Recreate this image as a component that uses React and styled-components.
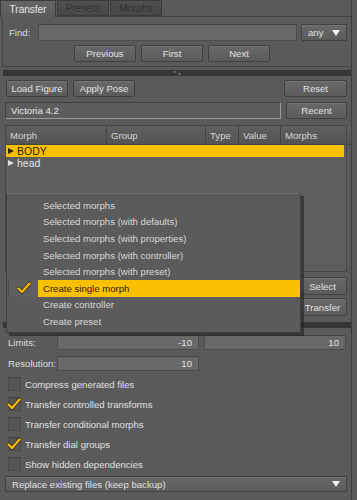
import React from 'react'
import styled, { createGlobalStyle } from 'styled-components'

const Global = createGlobalStyle`
  html, body { margin: 0; padding: 0; background: #5a5a5a; }
  body { font-family: "Liberation Sans", Arial, sans-serif; font-size: 9.6px; color: #e2e2e2; }
`

const Screen = styled.div`
  position: relative;
  width: 357px;
  height: 500px;
  overflow: hidden;
  background: #5a5a5a;
`

const Main = styled.div`
  width: 352px;
  height: 500px;
  border-right: 1px solid #3d3d3d;
  box-sizing: border-box;
`

const TabBar = styled.div`
  display: flex;
  height: 17px;
  border-bottom: 1px solid #454545;
  box-sizing: border-box;
`

const Tab = styled.div`
  width: ${p => p.w}px;
  height: ${p => (p.active ? 17 : 16)}px;
  box-sizing: border-box;
  display: flex;
  align-items: center;
  justify-content: center;
  border: 1px solid #3b3b3b;
  border-bottom: ${p => (p.active ? 'none' : '1px solid #3b3b3b')};
  margin-right: 1px;
  background: ${p => (p.active ? 'linear-gradient(#646464, #5c5c5c)' : 'linear-gradient(#4f4f4f, #474747)')};
  color: ${p => (p.active ? '#e6e6e6' : '#2e2e2e')};
  text-shadow: ${p => (p.active ? 'none' : '0 1px 0 #575757')};
  font-size: 10px;
  position: relative;
  z-index: 1;
`

const FindPanel = styled.div`
  margin: 0 0 0 2px;
  padding: 7px 4px 4px 6px;
  border-left: 1px solid #454545;
  border-bottom: 1px solid #454545;
  height: 50px;
  box-sizing: border-box;
`

const Row = styled.div`
  display: flex;
  align-items: center;
  gap: ${p => p.gap ?? 5}px;
  height: ${p => p.h || 17}px;
  margin-top: ${p => p.mt || 0}px;
  justify-content: ${p => p.justify || 'flex-start'};
`

const Label = styled.span`
  width: ${p => p.w}px;
  flex: none;
  color: #dedede;
  white-space: nowrap;
`

const Input = styled.div`
  flex: ${p => (p.w ? 'none' : '1')};
  width: ${p => p.w}px;
  height: ${p => p.h || 17}px;
  box-sizing: border-box;
  background: #686868;
  border: 1px solid #4c4c4c;
  border-top-color: #444;
  display: flex;
  align-items: center;
  justify-content: ${p => (p.right ? 'flex-end' : 'flex-start')};
  padding: 0 6px;
  color: #e4e4e4;
`

const Button = styled.div`
  width: ${p => p.w}px;
  height: ${p => p.h || 17}px;
  flex: none;
  box-sizing: border-box;
  background: linear-gradient(#696969, #5b5b5b);
  border: 1px solid #404040;
  border-radius: 2px;
  box-shadow: inset 0 1px 0 #747474;
  display: flex;
  align-items: center;
  justify-content: center;
  color: #e2e2e2;
  white-space: nowrap;
`

const Select = styled(Button)`
  width: ${p => (p.w ? p.w + 'px' : 'auto')};
  flex: ${p => (p.w ? 'none' : '1')};
  justify-content: space-between;
  padding: 0 6px 0 6px;
  border-radius: 1px;
`

const Arrow = styled.span`
  width: 0;
  height: 0;
  border-left: 4px solid transparent;
  border-right: 4px solid transparent;
  border-top: 6px solid #f2f2f2;
`

const Splitter = styled.div`
  height: 6px;
  margin: ${p => p.m};
  background: #363636;
  display: flex;
  justify-content: center;
  align-items: center;
`

const Section = styled.div`
  padding: 0 4px 0 5px;
`

const NameField = styled.div`
  width: 277px;
  height: 17px;
  box-sizing: border-box;
  background: #5d5d5d;
  border: 1px solid #3e3e3e;
  border-right-color: #9a9a9a;
  border-bottom-color: #9a9a9a;
  padding: 0 5px;
  display: flex;
  align-items: center;
  color: #e8e8e8;
`

const Table = styled.div`
  margin-top: 6px;
  height: 147px;
  background: #5e5e5e;
  border: 1px solid #464646;
  box-sizing: border-box;
`

const Header = styled.div`
  display: flex;
  height: 19px;
`

const HeadCell = styled.div`
  width: ${p => p.w}px;
  flex: ${p => (p.w ? 'none' : '1')};
  box-sizing: border-box;
  background: linear-gradient(#5f5f5f, #545454);
  border-right: 1px solid #444;
  border-bottom: 1px solid #444;
  display: flex;
  align-items: center;
  padding-left: 4px;
  color: #d6d6d6;
`

const TreeRow = styled.div`
  height: 12px;
  display: flex;
  align-items: center;
  gap: 3px;
  padding-left: 2px;
  background: ${p => (p.selected ? '#f9c000' : 'transparent')};
  color: ${p => (p.selected ? '#2a2200' : '#e4e4e4')};
  margin-right: 2px;
  font-size: 10.5px;
`

const Tri = styled.span`
  width: 0;
  height: 0;
  border-top: 3.5px solid transparent;
  border-bottom: 3.5px solid transparent;
  border-left: 6px solid ${p => p.c};
`

const SideButtons = styled.div`
  display: flex;
  flex-direction: column;
  align-items: flex-end;
  gap: 3px;
  margin-top: 5px;
`

const Form = styled.div`
  padding: 0 5px 0 8px;
`

const CheckRow = styled.div`
  display: flex;
  align-items: center;
  height: 20px;
  gap: 4px;
  color: #e0e0e0;
`

const Box = styled.div`
  position: relative;
  width: 13px;
  height: 14px;
  box-sizing: border-box;
  background: #555;
  border: 1px solid #4a4a4a;
  border-top-color: #404040;
  flex: none;
`

const CheckMark = ({ size = 14, style }) => (
  <svg width={size} height={size} viewBox="0 0 14 14" style={style}>
    <path d="M1.5 7.5 L5 11 L12.5 2.5" fill="none" stroke="#2e2a1a" strokeWidth="3.8" strokeLinecap="round" strokeLinejoin="round" />
    <path d="M1.5 7.5 L5 11 L12.5 2.5" fill="none" stroke="#f2b90a" strokeWidth="2.4" strokeLinecap="round" strokeLinejoin="round" />
  </svg>
)

const Menu = styled.div`
  position: absolute;
  left: 6px;
  top: 193px;
  width: 295px;
  height: 140px;
  box-sizing: border-box;
  background: #5b5b5b;
  border: 1px solid #404040;
  border-top-color: #6a6a6a;
  box-shadow: 3px 3px 0 rgba(30, 30, 30, 0.55);
  padding-top: 3px;
  z-index: 5;
`

const MenuItem = styled.div`
  display: flex;
  height: 16.6px;
  align-items: stretch;
`

const Gutter = styled.div`
  width: 30px;
  flex: none;
  display: flex;
  align-items: center;
  justify-content: center;
  box-sizing: border-box;
  margin-left: 1px;
  background: ${p => (p.on ? '#5f5f5f' : 'transparent')};
  border-left: ${p => (p.on ? '1px solid #4a4a4a' : 'none')};
`

const ItemText = styled.div`
  flex: 1;
  display: flex;
  align-items: center;
  padding-left: 5px;
  background: ${p => (p.on ? '#fbc000' : 'transparent')};
  color: ${p => (p.on ? '#2a2200' : '#d9d9d9')};
`

const Grip = () => (
  <svg width="14" height="6" viewBox="0 0 14 6">
    <path d="M3 1.5 L6 1.5 L4.5 3 Z" fill="#9a9a9a" />
    <path d="M8 4.5 L11 4.5 L9.5 3 Z" fill="#9a9a9a" />
  </svg>
)

const menuItems = [
  'Selected morphs',
  'Selected morphs (with defaults)',
  'Selected morphs (with properties)',
  'Selected morphs (with controller)',
  'Selected morphs (with preset)',
  'Create single morph',
  'Create controller',
  'Create preset',
]

const checks = [
  ['Compress generated files', false],
  ['Transfer controlled transforms', true],
  ['Transfer conditional morphs', false],
  ['Transfer dial groups', true],
  ['Show hidden dependencies', false],
]

export default function App() {
  return (
    <Screen>
      <Global />
      <Main>
        <TabBar>
          <Tab active w={56}>Transfer</Tab>
          <Tab w={52}>Presets</Tab>
          <Tab w={52}>Morphs</Tab>
        </TabBar>
        <FindPanel>
          <Row gap={4}>
            <Label w={25}>Find:</Label>
            <Input />
            <Select w={46}>any<Arrow /></Select>
          </Row>
          <Row mt={4} gap={5} justify="center" style={{ paddingRight: 12 }}>
            <Button w={62}>Previous</Button>
            <Button w={62}>First</Button>
            <Button w={62}>Next</Button>
          </Row>
        </FindPanel>
        <Splitter m="3px 0 0 3px"><Grip /></Splitter>
        <Section>
          <Row mt={4}>
            <Button w={62} style={{ marginLeft: 1 }}>Load Figure</Button>
            <Button w={62}>Apply Pose</Button>
            <span style={{ flex: 1 }} />
            <Button w={63}>Reset</Button>
          </Row>
          <Row mt={5}>
            <NameField>Victoria 4.2</NameField>
            <Button w={61}>Recent</Button>
          </Row>
          <Table>
            <Header>
              <HeadCell w={101}>Morph</HeadCell>
              <HeadCell w={99}>Group</HeadCell>
              <HeadCell w={33}>Type</HeadCell>
              <HeadCell w={42}>Value</HeadCell>
              <HeadCell w={66}>Morphs</HeadCell>
              <HeadCell />
            </Header>
            <TreeRow selected><Tri c="#2a2200" />BODY</TreeRow>
            <TreeRow><Tri c="#e0e0e0" />head</TreeRow>
          </Table>
          <SideButtons>
            <Button w={49} h={18}>Select</Button>
            <Button w={49} h={18}>Transfer</Button>
          </SideButtons>
        </Section>
        <Splitter m="6px 0 0 3px" />
        <Form>
          <Row mt={7} h={15} gap={0}>
            <Label w={49}>Limits:</Label>
            <Input w={142} h={15} right>-10</Input>
            <span style={{ width: 6 }} />
            <Input w={142} h={15} right>10</Input>
          </Row>
          <Row mt={6} h={15} gap={0}>
            <Label w={49}>Resolution:</Label>
            <Input w={142} h={15} right>10</Input>
          </Row>
          <div style={{ marginTop: 3 }}>
            {checks.map(([t, on]) => (
              <CheckRow key={t}>
                <Box>{on && <CheckMark style={{ position: 'absolute', left: -2, top: -1 }} />}</Box>
                {t}
              </CheckRow>
            ))}
          </div>
        </Form>
        <Section>
          <Row mt={2} h={16}>
            <Select h={16}>Replace existing files (keep backup)<Arrow /></Select>
          </Row>
        </Section>
      </Main>
      <Menu>
        {menuItems.map((t, i) => (
          <MenuItem key={t}>
            <Gutter on={i === 5}>{i === 5 && <CheckMark size={14} />}</Gutter>
            <ItemText on={i === 5}>{t}</ItemText>
          </MenuItem>
        ))}
      </Menu>
    </Screen>
  )
}
